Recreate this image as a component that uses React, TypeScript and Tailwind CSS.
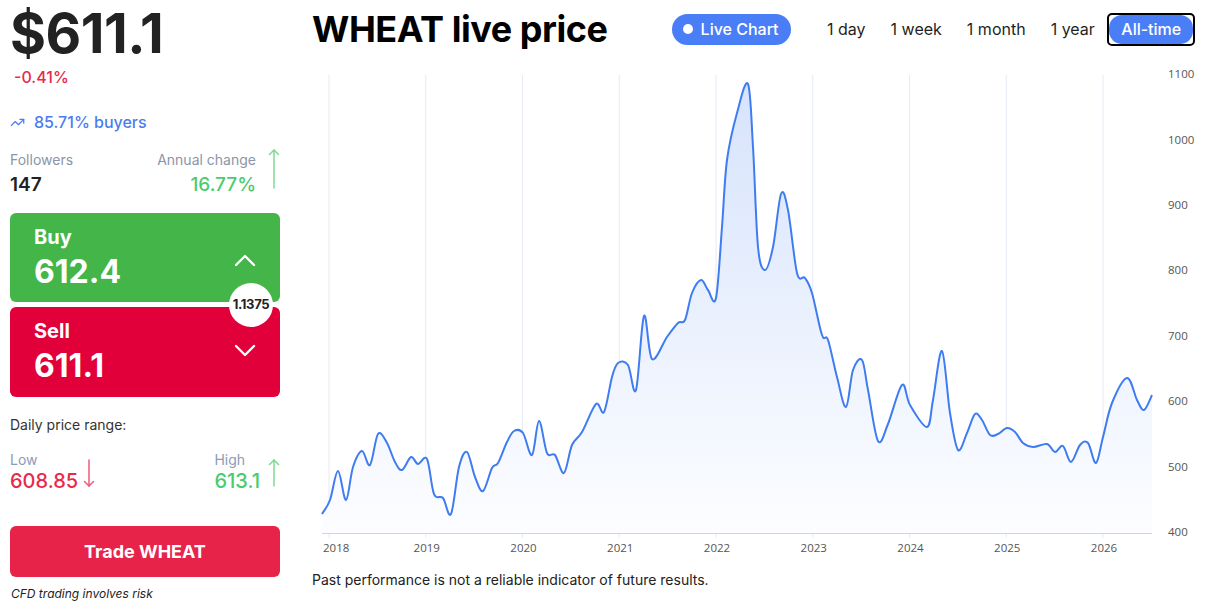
import React from 'react';
import { TrendingUp } from 'lucide-react';

// price samples in plot coordinates (x, y), left edge 322 → right edge 1152
const PTS: [number, number][] = [
  [322, 514], [330, 500], [338, 471], [346, 500], [353, 467], [362, 451], [370, 465], [378, 434],
  [387, 443], [395, 462], [402, 470], [411, 457], [418, 464], [427, 459], [434, 494], [443, 498],
  [451, 514], [459, 467], [467, 452], [475, 477], [483, 491], [492, 468], [498, 463], [507, 442],
  [514, 431], [523, 433], [532, 455], [539, 421], [547, 453], [555, 455], [564, 473], [572, 445],
  [582, 432], [596, 404], [604, 412], [612, 377], [618, 363], [628, 365], [636, 390], [644, 316],
  [652, 359], [667, 337], [678, 323], [685, 320], [692, 293], [701, 280], [708, 290], [716, 298],
  [722, 227], [727, 160], [737, 113], [748, 84], [753, 147], [758, 247], [765, 270], [773, 247],
  [781, 194], [788, 210], [797, 273], [805, 278], [812, 293], [822, 335], [828, 340], [837, 377],
  [846, 407], [853, 370], [862, 360], [868, 390], [878, 441], [888, 424], [902, 385], [910, 405],
  [927, 427], [933, 400], [942, 351], [950, 413], [958, 450], [967, 433], [975, 414], [982, 420],
  [990, 435], [998, 434], [1007, 428], [1015, 432], [1023, 443], [1033, 447], [1047, 444],
  [1055, 452], [1063, 446], [1071, 462], [1080, 445], [1088, 443], [1096, 463], [1103, 437],
  [1112, 403], [1127, 378], [1137, 400], [1144, 410], [1152, 395],
];

const AXIS_Y = 533;
const TOP_Y = 75;
const yFor = (v: number) => AXIS_Y - (v - 400) * ((AXIS_Y - TOP_Y) / 700);
const YEARS = [2018, 2019, 2020, 2021, 2022, 2023, 2024, 2025, 2026];
const xFor = (i: number) => 329 + i * 96.75;

function smoothPath(pts: [number, number][]) {
  let d = `M${pts[0][0]},${pts[0][1]}`;
  for (let i = 0; i < pts.length - 1; i++) {
    const p0 = pts[i - 1] || pts[i];
    const p1 = pts[i];
    const p2 = pts[i + 1];
    const p3 = pts[i + 2] || p2;
    const c1x = p1[0] + (p2[0] - p0[0]) / 6;
    const c1y = p1[1] + (p2[1] - p0[1]) / 6;
    const c2x = p2[0] - (p3[0] - p1[0]) / 6;
    const c2y = p2[1] - (p3[1] - p1[1]) / 6;
    d += ` C${c1x.toFixed(1)},${c1y.toFixed(1)} ${c2x.toFixed(1)},${c2y.toFixed(1)} ${p2[0]},${p2[1]}`;
  }
  return d;
}

const Arrow = ({ dir, color, h }: { dir: 'up' | 'down'; color: string; h: number }) => (
  <svg width="12" height={h} viewBox={`0 0 12 ${h}`} fill="none" stroke={color} strokeWidth="1.5" strokeLinecap="round">
    {dir === 'up' ? (
      <>
        <line x1="6" y1="1" x2="6" y2={h - 1} />
        <polyline points="1.5,5.5 6,1 10.5,5.5" />
      </>
    ) : (
      <>
        <line x1="6" y1="1" x2="6" y2={h - 1} />
        <polyline points={`1.5,${h - 5.5} 6,${h - 1} 10.5,${h - 5.5}`} />
      </>
    )}
  </svg>
);

const Chevron = ({ dir }: { dir: 'up' | 'down' }) => (
  <svg width="22" height="14" viewBox="0 0 22 14" fill="none" stroke="white" strokeWidth="2.4" strokeLinecap="round" strokeLinejoin="round">
    {dir === 'up' ? <polyline points="2,12 11,3 20,12" /> : <polyline points="2,2 11,11 20,2" />}
  </svg>
);

const PriceChart: React.FC = () => {
  const line = smoothPath(PTS);
  const area = `${line} L1152,${AXIS_Y} L322,${AXIS_Y} Z`;
  return (
    <svg width="896" height="504" viewBox="311 58 896 504" className="block">
      <defs>
        <linearGradient id="wheatFill" gradientUnits="userSpaceOnUse" x1="0" y1={TOP_Y} x2="0" y2={AXIS_Y}>
          <stop offset="0" stopColor="#d6e3fc" />
          <stop offset="1" stopColor="#fcfdff" />
        </linearGradient>
      </defs>
      {YEARS.map((y, i) => (
        <line key={y} x1={xFor(i)} x2={xFor(i)} y1={TOP_Y} y2={AXIS_Y + 5} stroke="#e5eaf5" strokeWidth="1" />
      ))}
      <path d={area} fill="url(#wheatFill)" />
      <line x1="322" x2="1152" y1={AXIS_Y + 0.5} y2={AXIS_Y + 0.5} stroke="#cdd4e6" strokeWidth="1" />
      <path d={line} fill="none" stroke="#3f7cf0" strokeWidth="2" strokeLinejoin="round" />
      {[1100, 1000, 900, 800, 700, 600, 500, 400].map((v) => (
        <text key={v} x="1168" y={yFor(v)} dominantBaseline="middle" fill="#555" fontSize="11.5" fontFamily="'Open Sans', sans-serif">
          {v}
        </text>
      ))}
      {YEARS.map((y, i) => (
        <text
          key={y}
          x={i === 0 ? 323 : xFor(i) + 1}
          y="549"
          dominantBaseline="middle"
          textAnchor={i === 0 ? 'start' : 'middle'}
          fill="#555"
          fontSize="11.5"
          fontFamily="'Open Sans', sans-serif"
        >
          {y}
        </text>
      ))}
    </svg>
  );
};

export default function App() {
  const tabs = ['1 day', '1 week', '1 month', '1 year'];
  return (
    <div className="w-[1207px] h-[612px] bg-white flex font-['Inter',sans-serif] text-[#222] overflow-hidden">
      {/* left column: quote, buy/sell, daily range */}
      <div className="w-[270px] ml-[10px] flex flex-col shrink-0">
        <div className="text-[55px] leading-[66px] font-bold tracking-[-0.5px] text-[#222]">$611.1</div>
        <div className="mt-[1px] ml-[4px] text-[16px] leading-[20px] font-medium text-[#e8294a]">-0.41%</div>
        <div className="mt-[25px] flex items-center gap-[9px] text-[16px] leading-[20px] font-medium text-[#4a7cf0]">
          <TrendingUp size={15} strokeWidth={2} />
          <span>85.71% buyers</span>
        </div>
        <div className="mt-[19px] flex justify-between items-start">
          <div className="flex flex-col">
            <span className="text-[14px] leading-[18px] text-[#8b95a7]">Followers</span>
            <span className="mt-[4px] text-[19px] leading-[24px] font-semibold text-[#222]">147</span>
          </div>
          <div className="flex items-start gap-[12px]">
            <div className="flex flex-col items-end">
              <span className="text-[14px] leading-[18px] text-[#8b95a7]">Annual change</span>
              <span className="mt-[4px] text-[19px] leading-[24px] font-medium text-[#4ccb6d]">16.77%</span>
            </div>
            <div className="mt-[-2px]">
              <Arrow dir="up" color="#7ddb94" h={40} />
            </div>
          </div>
        </div>

        <div className="relative mt-[16px] flex flex-col gap-[5px]">
          <div className="h-[89px] rounded-[6px] bg-[#44b549] px-[24px] flex items-center justify-between text-white">
            <div className="flex flex-col">
              <span className="text-[20px] leading-[24px] font-bold">Buy</span>
              <span className="mt-[4px] text-[32px] leading-[38px] font-bold">612.4</span>
            </div>
            <div className="mt-[4px]">
              <Chevron dir="up" />
            </div>
          </div>
          <div className="h-[90px] rounded-[6px] bg-[#e2003a] px-[24px] flex items-center justify-between text-white">
            <div className="flex flex-col">
              <span className="text-[20px] leading-[24px] font-bold">Sell</span>
              <span className="mt-[4px] text-[32px] leading-[38px] font-bold">611.1</span>
            </div>
            <div className="mt-[-2px]">
              <Chevron dir="down" />
            </div>
          </div>
          <div className="absolute left-[219px] top-[70px] w-[44px] h-[44px] rounded-full bg-white flex items-center justify-center text-[13px] font-bold text-[#222] tracking-[-0.3px]">
            1.1375
          </div>
        </div>

        <div className="mt-[19px] text-[14px] leading-[18px] text-[#333]">Daily price range:</div>
        <div className="mt-[17px] flex justify-between">
          <div className="flex items-start gap-[5px]">
            <div className="flex flex-col">
              <span className="text-[14px] leading-[18px] text-[#8c9bb6]">Low</span>
              <span className="text-[20px] leading-[24px] font-medium text-[#e8294a]">608.85</span>
            </div>
            <div className="mt-[8px]">
              <Arrow dir="down" color="#ec5a7c" h={28} />
            </div>
          </div>
          <div className="flex items-start gap-[8px]">
            <div className="flex flex-col">
              <span className="text-[14px] leading-[18px] text-[#8c9bb6]">High</span>
              <span className="text-[20px] leading-[24px] font-medium text-[#4ccb6d]">613.1</span>
            </div>
            <div className="mt-[8px]">
              <Arrow dir="up" color="#7ddb94" h={28} />
            </div>
          </div>
        </div>

        <button className="mt-[33px] h-[51px] rounded-[6px] bg-[#e8234a] text-white text-[18px] font-bold">
          Trade WHEAT
        </button>
        <div className="mt-[9px] ml-[1px] text-[12px] leading-[16px] italic text-[#222]">CFD trading involves risk</div>
      </div>

      {/* right column: title, range tabs, chart */}
      <div className="ml-[31px] flex-1 flex flex-col">
        <div className="mt-[12px] h-[34px] flex items-center">
          <h1 className="ml-[1px] text-[36px] leading-[34px] font-bold text-black tracking-[-0.45px]">WHEAT live price</h1>
          <div className="ml-[64px] h-[31px] pl-[11px] pr-[12px] rounded-full bg-[#4a7ef6] text-white flex items-center gap-[8px] text-[16px] font-medium">
            <span className="w-[10px] h-[10px] rounded-full bg-white" />
            Live Chart
          </div>
          <div className="ml-[24px] flex items-center text-[16px] text-[#1f1f1f]">
            {tabs.map((t) => (
              <span key={t} className="px-[12.5px]">
                {t}
              </span>
            ))}
            <span className="border-2 border-black rounded-[5px] p-0">
              <span className="block h-[29px] px-[12px] rounded-[13px] bg-[#4a7ef6] text-white font-medium leading-[29px]">
                All-time
              </span>
            </span>
          </div>
        </div>
        <div className="mt-[12px]">
          <PriceChart />
        </div>
        <div className="mt-[8px] ml-[1px] text-[14px] leading-[20px] text-[#222]">
          Past performance is not a reliable indicator of future results.
        </div>
      </div>
    </div>
  );
}
